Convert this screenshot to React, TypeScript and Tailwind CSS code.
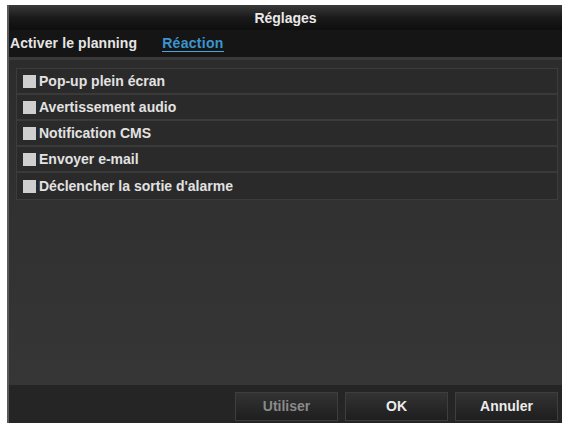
import { useState } from 'react'

const OPTIONS = [
  'Pop-up plein écran',
  'Avertissement audio',
  'Notification CMS',
  'Envoyer e-mail',
  "Déclencher la sortie d'alarme",
]

export default function App() {
  const [checked, setChecked] = useState<boolean[]>(OPTIONS.map(() => false))

  return (
    <div className="h-[423px] w-[562px] bg-white pl-[7px] pt-[5px] font-['Liberation_Sans',Arial,sans-serif] font-bold">
      <div className="flex h-full flex-col border-l-2 border-[#5a5a5a] bg-[#2e2e2e]">
        {/* title bar */}
        <div className="flex h-[25px] shrink-0 items-center justify-center bg-gradient-to-b from-[#3a3a3a] via-[#1a1a1a] to-[#0e0e0e] pt-[2px] text-[14px] text-[#e8e8e8]">
          Réglages
        </div>

        {/* tabs */}
        <div className="flex h-[30px] shrink-0 items-center gap-[25px] border-b-[3px] border-[#3a3a3a] bg-[#151515] pl-[1px] text-[14px]">
          <span className="tracking-[0.1px] text-[#e6e6e6]">Activer le planning</span>
          <span className="border-b border-[#4aa6dc] leading-[16px] tracking-[0.3px] text-[#3b95cf]">Réaction</span>
        </div>

        {/* body */}
        <div className="flex flex-1 flex-col bg-gradient-to-b from-[#2c2c2c] to-[#363636] pl-[7px] pr-[4px] pt-[8px]">
          <ul className="border border-[#3c3c3c] bg-[#2a2a2a]">
            {OPTIONS.map((label, i) => (
              <li
                key={label}
                className="flex h-[26px] items-center gap-[3px] border-b-2 border-[#3a3a3a] pl-[6px] text-[14px] text-[#e2e2e2] last:border-b-0"
                onClick={() => setChecked((c) => c.map((v, j) => (j === i ? !v : v)))}
              >
                <span className="h-[13px] w-[13px] shrink-0 bg-[#cfcfcf]">
                  {checked[i] && <span className="block h-full w-full bg-[#3b95cf]" />}
                </span>
                {label}
              </li>
            ))}
          </ul>
        </div>

        {/* footer */}
        <div className="flex h-[38px] shrink-0 items-center justify-end gap-[7px] bg-[#252525] pr-[4px] pt-[4px] text-[14px]">
          <button type="button" className="h-[29px] w-[103px] border border-[#3e3e3e] bg-gradient-to-b from-[#333] to-[#1e1e1e] text-[#8a8a8a]">
            Utiliser
          </button>
          <button type="button" className="h-[29px] w-[103px] border border-[#3e3e3e] bg-gradient-to-b from-[#333] to-[#1e1e1e] text-[#ececec]">
            OK
          </button>
          <button type="button" className="h-[29px] w-[103px] border border-[#3e3e3e] bg-gradient-to-b from-[#333] to-[#1e1e1e] text-[#ececec]">
            Annuler
          </button>
        </div>
      </div>
    </div>
  )
}
